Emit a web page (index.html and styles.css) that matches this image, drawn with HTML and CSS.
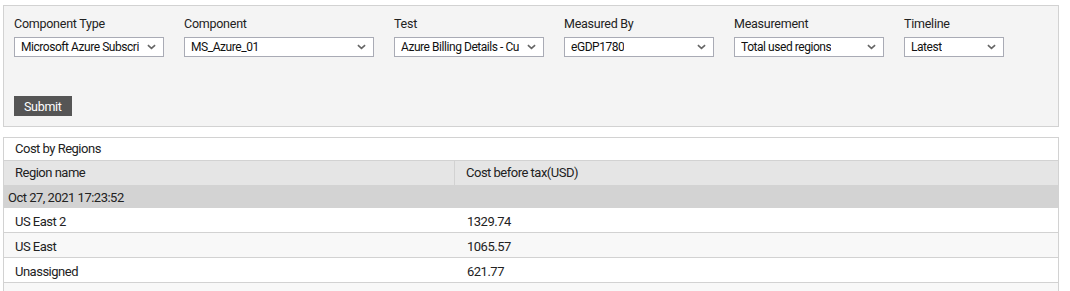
FILE: index.html
```html
<!DOCTYPE html>
<html lang="en">
<head>
    <meta charset="UTF-8">
    <title>Cost by Regions</title>
    <link rel="stylesheet" href="styles.css">
</head>
<body>

    <div class="filter-panel">
        <div class="filter-row">
            <div class="field">
                <label>Component Type</label>
                <div class="select w150"><span>Microsoft Azure Subscri</span><svg class="chev" viewBox="0 0 10 6"><path d="M1 1l4 3.5L9 1"/></svg></div>
            </div>
            <div class="field">
                <label>Component</label>
                <div class="select w190"><span>MS_Azure_01</span><svg class="chev" viewBox="0 0 10 6"><path d="M1 1l4 3.5L9 1"/></svg></div>
            </div>
            <div class="field">
                <label>Test</label>
                <div class="select w150"><span>Azure Billing Details - Cu</span><svg class="chev" viewBox="0 0 10 6"><path d="M1 1l4 3.5L9 1"/></svg></div>
            </div>
            <div class="field">
                <label>Measured By</label>
                <div class="select w150"><span>eGDP1780</span><svg class="chev" viewBox="0 0 10 6"><path d="M1 1l4 3.5L9 1"/></svg></div>
            </div>
            <div class="field">
                <label>Measurement</label>
                <div class="select w150"><span>Total used regions</span><svg class="chev" viewBox="0 0 10 6"><path d="M1 1l4 3.5L9 1"/></svg></div>
            </div>
            <div class="field">
                <label>Timeline</label>
                <div class="select w100"><span>Latest</span><svg class="chev" viewBox="0 0 10 6"><path d="M1 1l4 3.5L9 1"/></svg></div>
            </div>
        </div>
        <button class="submit-btn">Submit</button>
    </div>

    <div class="result-panel">
        <div class="panel-title">Cost by Regions</div>
        <div class="grid-row head">
            <div class="cell col-name">Region name</div>
            <div class="cell">Cost before tax(USD)</div>
        </div>
        <div class="date-row">Oct 27, 2021 17:23:52</div>
        <div class="grid-row data">
            <div class="cell col-name">US East 2</div>
            <div class="cell">1329.74</div>
        </div>
        <div class="grid-row data alt">
            <div class="cell col-name">US East</div>
            <div class="cell">1065.57</div>
        </div>
        <div class="grid-row data">
            <div class="cell col-name">Unassigned</div>
            <div class="cell">621.77</div>
        </div>
        <div class="grid-row data alt">
            <div class="cell col-name"></div>
            <div class="cell"></div>
        </div>
    </div>

</body>
</html>
```

FILE: styles.css
```css
/* Page */
html, body {
    margin: 0;
    background: #ffffff;
    font-family: Roboto, "Liberation Sans", Arial, sans-serif;
    color: #222;
    overflow: hidden;
}

body {
    padding: 5px 11px 0 3px;
}

/* Filter box on top */
.filter-panel {
    background: #f4f4f4;
    border: 1px solid #d2d2d2;
    padding: 10px 10px 10px 10px;
}

.filter-row {
    display: flex;
    gap: 20px;
}

.field label {
    display: block;
    font-size: 12.5px;
    letter-spacing: -0.25px;
    line-height: 16px;
    margin-bottom: 5px;
    color: #222;
}

.select {
    display: flex;
    align-items: center;
    justify-content: space-between;
    height: 20px;
    box-sizing: border-box;
    background: #fff;
    border: 1px solid #a9abb5;
    padding: 0 7px 0 6px;
    font-size: 12px;
    letter-spacing: -0.45px;
    color: #111;
    white-space: nowrap;
    overflow: hidden;
}

.select span {
    overflow: hidden;
}

.w100 { width: 100px; }
.w150 { width: 150px; }
.w190 { width: 190px; }

.chev {
    width: 9px;
    height: 6px;
    flex-shrink: 0;
    margin-left: 5px;
    fill: none;
    stroke: #666;
    stroke-width: 1.8;
}

.submit-btn {
    display: block;
    margin-top: 39px;
    height: 20px;
    padding: 0 10px;
    border: none;
    background: #555555;
    color: #fff;
    font-family: Roboto, "Liberation Sans", Arial, sans-serif;
    font-size: 12.5px;
    letter-spacing: -0.3px;
}

/* Results */
.result-panel {
    margin-top: 10px;
    border: 1px solid #d2d2d2;
    border-bottom: none;
    font-size: 13px;
    letter-spacing: -0.5px;
}

.panel-title {
    height: 22px;
    line-height: 22px;
    padding-left: 11px;
    border-bottom: 1px solid #d2d2d2;
}

.grid-row {
    display: grid;
    grid-template-columns: 451px 1fr;
}

.cell {
    padding: 0 11px;
    white-space: nowrap;
}

.head {
    background: #e5e5e5;
    height: 24px;
    line-height: 24px;
}

.head .col-name {
    border-right: 1px solid #d2d2d2;
}

.date-row {
    background: #d3d3d3;
    height: 23px;
    line-height: 25px;
    padding-left: 4px;
    overflow: hidden;
}

.data {
    height: 24px;
    line-height: 28px;
    border-bottom: 1px solid #d2d2d2;
    overflow: hidden;
}

.data .cell + .cell {
    padding-left: 12px;
}

.alt {
    background: #f8f8f8;
}
```
